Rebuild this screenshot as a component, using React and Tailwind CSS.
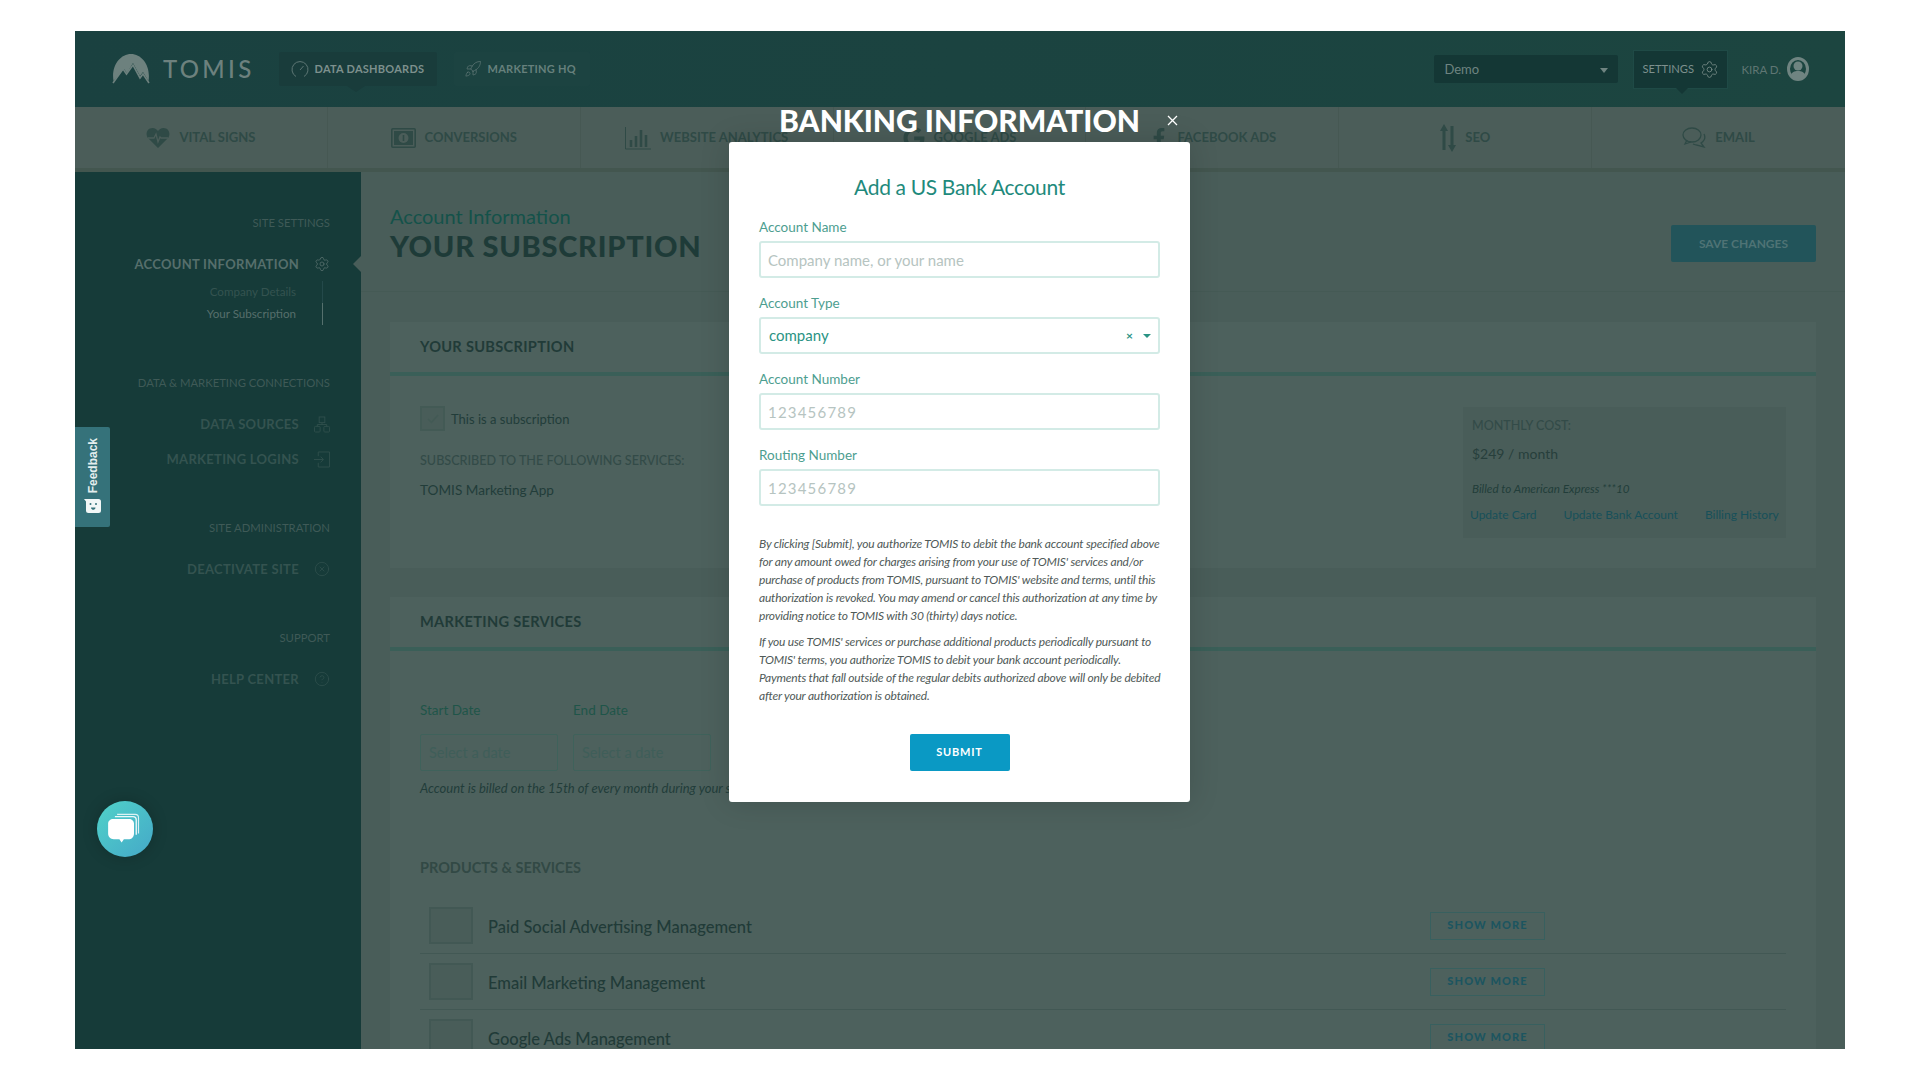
import React from 'react';
import { Rocket, Settings, CircleX, CircleHelp } from 'lucide-react';
import { FaGoogle, FaFacebookF } from 'react-icons/fa';

const Logo = () => (
  <svg width="38" height="31" viewBox="0 0 38 31" fill="none">
    <path d="M1.500 27C-1 12 8 0 19 0s20 12 17.500 27L31 18l-3 4-7-13-6 10-3-4z" fill="#6d817e" />
    <path d="M1 29l10-14 3.500 5L21 11l7 13 3-4 6 9" stroke="#6d817e" strokeWidth="1.600" />
  </svg>
);

const Gauge = () => (
  <svg width="18" height="18" viewBox="0 0 18 18" fill="none" stroke="#5d7674" strokeWidth="1">
    <path d="M5 16.500A8 8 0 1 1 13 16.500" />
    <path d="M9 10l3.500-4" />
  </svg>
);

const HeartIcon = () => (
  <svg width="24" height="22" viewBox="0 0 24 22">
    <path d="M12 21L2 11C-1 7 1 1 6.500 1 9 1 11 2.500 12 4c1-1.500 3-3 5.500-3C23 1 25 7 22 11z" fill="#2f4a46" />
    <path d="M2 11h6l2-4 2 8 2-5 1 1h7" fill="none" stroke="#4b5d59" strokeWidth="1.300" />
  </svg>
);

const MoneyIcon = () => (
  <svg width="25" height="20" viewBox="0 0 25 20" fill="none">
    <rect x="0.800" y="0.800" width="23.400" height="18.400" rx="1" stroke="#2f4a46" strokeWidth="1.600" />
    <path d="M3 3h19v14H3z" fill="#2f4a46" />
    <circle cx="12.500" cy="10" r="5" fill="#4b5d59" />
    <path d="M12.500 7v6" stroke="#2f4a46" strokeWidth="1.600" />
  </svg>
);

const BarsIcon = () => (
  <svg width="26" height="24" viewBox="0 0 26 24" fill="none">
    <path d="M0.500 1v22H26" stroke="#2f4a46" />
    <path d="M6 14v7M11 10v11M16 4v17M21 9v12" stroke="#2f4a46" strokeWidth="2.500" />
  </svg>
);

const ArrowsIcon = () => (
  <svg width="16" height="28" viewBox="0 0 16 28" fill="#2f4a46">
    <path d="M4 0l4 7H5.500v19h-3V7H0zM12 28l-4-7h2.500V2h3v19H16z" />
  </svg>
);

const ChatsIcon = () => (
  <svg width="24" height="21" viewBox="0 0 24 21" fill="none" stroke="#2f4a46" strokeWidth="1.300">
    <ellipse cx="10" cy="8" rx="9" ry="7" />
    <path d="M5 13l-2 4 6-2" />
    <path d="M22 7c2 4 0 7-3 9l3 4-8-2-3-1" />
  </svg>
);

const BoxesIcon = () => (
  <svg width="17" height="17" viewBox="0 0 17 17" fill="none" stroke="#2f4f4c">
    <rect x="5.500" y="0.500" width="6" height="6" />
    <rect x="0.500" y="10.500" width="6" height="6" rx="1" />
    <rect x="10.500" y="10.500" width="6" height="6" rx="1" />
    <path d="M8.500 6.500v2M3.500 10.500v-2h10v2" />
  </svg>
);

const LoginIcon = () => (
  <svg width="17" height="17" viewBox="0 0 17 17" fill="none" stroke="#2f4f4c">
    <path d="M4.500 5V0.500h12v16h-12V12" />
    <path d="M0 8.500h10M7 5.500l3 3-3 3" />
  </svg>
);

const UserIcon = () => (
  <svg width="22" height="24" viewBox="0 0 22 24" fill="none">
    <ellipse cx="11" cy="12" rx="9.500" ry="10.500" stroke="#6f8481" strokeWidth="3" />
    <circle cx="11" cy="9" r="4.500" fill="#6f8481" />
    <path d="M3.500 19c1-4 4-5 7.500-5s6.500 1 7.500 5a9 9 0 0 1-15 0z" fill="#6f8481" />
  </svg>
);

const BubbleIcon = () => (
  <svg width="36" height="36" viewBox="0 0 32 32" fill="none">
    <path d="M9 3h16a3 3 0 0 1 3 3v14" stroke="#fff" strokeWidth="1" opacity="0.800" />
    <path d="M7 5h16a3 3 0 0 1 3 3v13" stroke="#fff" strokeWidth="1.200" opacity="0.900" />
    <path d="M5 7h15c2 0 4 2 4 4v9c0 3-2 5-4 5h-5l-2 3-2-3H6c-3 0-5-2-5-5v-9c0-2 2-4 4-4z" fill="#fff" />
  </svg>
);

const BotIcon = () => (
  <svg width="17" height="14" viewBox="0 0 17 14">
    <path d="M0 0h14.500A2.500 2.500 0 0 1 17 2.500v9a2.500 2.500 0 0 1-2.500 2.500h-10A2.500 2.500 0 0 1 2 11.500V2.500z" fill="#f2f7f7" />
    <circle cx="6.500" cy="5" r="1" fill="#35727a" />
    <circle cx="12" cy="5" r="1" fill="#35727a" />
    <path d="M7 8.500h4.500c0 3-4.500 3-4.500 0z" fill="#35727a" />
  </svg>
);

const tabs = [
  { label: 'VITAL SIGNS', icon: <HeartIcon /> },
  { label: 'CONVERSIONS', icon: <MoneyIcon /> },
  { label: 'WEBSITE ANALYTICS', icon: <BarsIcon /> },
  { label: 'GOOGLE ADS', icon: <FaGoogle size={22} color="#2f4a46" /> },
  { label: 'FACEBOOK ADS', icon: <FaFacebookF size={20} color="#2f4a46" /> },
  { label: 'SEO', icon: <ArrowsIcon /> },
  { label: 'EMAIL', icon: <ChatsIcon /> },
];

const SideHeading = ({ children, className = '' }) => (
  <p className={`h-5 text-right text-[11.3px] leading-5 text-[#3f5a57] ${className}`}>{children}</p>
);

const SideLink = ({ label, icon, bright, className = '' }) => (
  <div className={`flex h-6 items-center justify-end gap-[15px] ${className}`}>
    <span className={`pt-px text-[13px] font-bold tracking-[0.3px] ${bright ? 'text-[#566f6c]' : 'text-[#345350]'}`}>{label}</span>
    <span className="flex w-4 justify-center">{icon}</span>
  </div>
);

const Sidebar = () => (
  <aside className="relative w-[286px] shrink-0 bg-[#163b39] pl-4 pr-[31px] pt-[41px]">
    <SideHeading>SITE SETTINGS</SideHeading>
    <SideLink className="mt-[19px]" bright label="ACCOUNT INFORMATION" icon={<Settings size={18} strokeWidth={1.2} color="#566f6c" />} />
    <div className="mt-[5px] text-[11.6px] leading-[22px]">
      <div className="mr-[7px] border-r border-[#24494a] pr-[26px] text-right text-[#345350]">Company Details</div>
      <div className="mr-[7px] border-r border-[#55706d] pr-[26px] text-right text-[#566f6c]">Your Subscription</div>
    </div>
    <SideHeading className="mt-[48px]">DATA &amp; MARKETING CONNECTIONS</SideHeading>
    <SideLink className="mt-[19px]" label="DATA SOURCES" icon={<BoxesIcon />} />
    <SideLink className="mt-[11px]" label="MARKETING LOGINS" icon={<LoginIcon />} />
    <SideHeading className="mt-[47px]">SITE ADMINISTRATION</SideHeading>
    <SideLink className="mt-[19px]" label="DEACTIVATE SITE" icon={<CircleX size={18} strokeWidth={1} color="#345350" />} />
    <SideHeading className="mt-[47px]">SUPPORT</SideHeading>
    <SideLink className="mt-[19px]" label="HELP CENTER" icon={<CircleHelp size={18} strokeWidth={1} color="#345350" />} />
    <span className="absolute right-0 top-[84px] h-0 w-0 border-y-[8px] border-r-[8px] border-y-transparent border-r-[#495d59]" />
  </aside>
);

const Card = ({ title, children, className = '' }) => (
  <section className={`bg-[#4d615d] ${className}`}>
    <div className="flex h-[54px] items-center border-b-4 border-[#3a5f58] px-[30px]">
      <h3 className="text-[14.6px] font-bold tracking-[0.3px] text-[#213b38]">{title}</h3>
    </div>
    {children}
  </section>
);

const products = ['Paid Social Advertising Management', 'Email Marketing Management', 'Google Ads Management'];

const MainPanel = () => (
  <main className="flex-1 bg-[#495d59]">
    <div className="flex h-[120px] justify-between border-b border-[#455a55] px-[29px] pt-[31px]">
      <div>
        <p className="text-[20px] leading-[26px] text-[#14524a]">Account Information</p>
        <h1 className="mt-px text-[29px] font-black leading-[32px] tracking-[0.75px] text-[#1e3b38]">YOUR SUBSCRIPTION</h1>
      </div>
      <button className="mt-[22px] h-[37px] w-[145px] rounded-[2px] bg-[#22545a] text-[12px] font-bold text-[#4f7375]">SAVE CHANGES</button>
    </div>
    <div className="px-[29px] pt-[30px]">
      <Card title="YOUR SUBSCRIPTION" className="h-[246px]">
        <div className="flex justify-between px-[30px] pt-[30px]">
          <div>
            <div className="flex h-[25px] items-center gap-[6px]">
              <span className="flex h-[25px] w-[25px] items-center justify-center border-2 border-[#435a55] bg-[#495d59]">
                <svg width="12" height="10" viewBox="0 0 12 10" fill="none" stroke="#435a55" strokeWidth="1.500"><path d="M1 5l3.500 3.500L11 1" /></svg>
              </span>
              <span className="pt-[2px] text-[13px] text-[#223d3a]">This is a subscription</span>
            </div>
            <p className="mt-[20px] text-[12.6px] font-medium leading-5 text-[#334b48]">SUBSCRIBED TO THE FOLLOWING SERVICES:</p>
            <p className="mt-[8px] text-[13.600px] leading-[22px] text-[#223d3a]">TOMIS Marketing App</p>
          </div>
          <div className="mt-px h-[131px] w-[323px] bg-[#495d59] pl-[9px] pt-[10px]">
            <p className="text-[12.5px] font-medium leading-[18px] text-[#334b48]">MONTHLY COST:</p>
            <p className="mt-[8px] text-[14px] leading-[22px] text-[#273f3c]">$249 / month</p>
            <p className="mt-[14px] text-[11.7px] italic leading-[18px] text-[#223d3a]">Billed to American Express ***10</p>
            <div className="-ml-[2px] mt-[9px] flex gap-[27px] whitespace-nowrap text-[12px] leading-[18px] text-[#17505a]">
              <span>Update Card</span>
              <span>Update Bank Account</span>
              <span>Billing History</span>
            </div>
          </div>
        </div>
      </Card>
      <Card title="MARKETING SERVICES" className="mt-[29px] h-[460px]">
        <div className="px-[30px] pt-[49px]">
          <div className="flex gap-[15px]">
            {['Start Date', 'End Date'].map((label) => (
              <div key={label} className="w-[138px]">
                <p className="text-[13.500px] leading-5 text-[#1f5549]">{label}</p>
                <div className="mt-[14px] flex h-[37px] items-center rounded-[2px] border border-[#3f625b] px-2 text-[14.500px] text-[#3f5e59]">Select a date</div>
              </div>
            ))}
          </div>
          <p className="mt-[7px] text-[13px] italic leading-5 text-[#223d3a]">Account is billed on the 15th of every month during your subscription.</p>
          <p className="mt-[60px] text-[14.500px] font-bold leading-5 text-[#324945]">PRODUCTS &amp; SERVICES</p>
          <div className="mt-[20px]">
            {products.map((name) => (
              <div key={name} className="h-[56px] border-b border-[#425854] pl-[9px] pt-[9px]">
                <div className="flex h-[37px] items-center">
                  <span className="h-[37px] w-[44px] border-2 border-[#425854] bg-[#495d59]" />
                  <span className="ml-[15px] translate-y-[2px] text-[16.500px] font-medium text-[#213b38]">{name}</span>
                  <button className="ml-auto mr-[241px] h-[28px] w-[115px] border border-[#38605f] text-[11px] font-black tracking-[1.1px] text-[#1c5560]">SHOW MORE</button>
                </div>
              </div>
            ))}
          </div>
        </div>
      </Card>
    </div>
  </main>
);

const Field = ({ label, children }) => (
  <div className="mb-[15px]">
    <label className="block h-5 text-[13.500px] leading-5 text-[#4d9e90]">{label}</label>
    <div className="mt-[4px]">{children}</div>
  </div>
);

const TextInput = ({ placeholder, digits }) => (
  <input
    placeholder={placeholder}
    className={`h-[37px] w-full rounded-[3px] border-2 border-[#d3ebe6] bg-white px-[7px] text-[15px] outline-none placeholder:text-[#b6c4c1] ${digits ? 'tracking-[1.2px]' : ''}`}
  />
);

const BankModal = () => (
  <div className="absolute inset-0 flex flex-col items-center pr-px pt-[71px]">
    <div className="relative w-[461px]">
      <h2 className="h-9 text-center text-[30px] font-black leading-9 text-white">BANKING INFORMATION</h2>
      <svg className="absolute right-[12px] top-[13px]" width="11" height="11" viewBox="0 0 11 11" stroke="#fff" strokeWidth="1.300">
        <path d="M1 1l9 9M10 1l-9 9" />
      </svg>
      <div className="mt-[4px] h-[660px] rounded-[3px] bg-white px-[30px] pt-[30px] shadow-[0_0_30px_rgba(0,0,0,0.15)]">
        <h3 className="h-[30px] text-center text-[21px] leading-[30px] tracking-[-0.35px] text-[#1f8a7c]">Add a US Bank Account</h3>
        <div className="mt-[15px]">
          <Field label="Account Name"><TextInput placeholder="Company name, or your name" /></Field>
          <Field label="Account Type">
            <div className="flex h-[37px] items-center rounded-[3px] border-2 border-[#d3ebe6] pl-[8px] pr-[7px] text-[15px] text-[#2a9384]">
              <span>company</span>
              <span className="ml-auto text-[12px] font-bold leading-none">×</span>
              <span className="ml-[10px] h-0 w-0 border-x-[4px] border-t-[4px] border-x-transparent border-t-[#2a9384]" />
            </div>
          </Field>
          <Field label="Account Number"><TextInput placeholder="123456789" digits /></Field>
          <Field label="Routing Number"><TextInput placeholder="123456789" digits /></Field>
        </div>
        <div className="mt-[29px] whitespace-nowrap text-[12px] italic leading-[18px] tracking-[-0.2px] text-[#505a58]">
          <p>
            By clicking [Submit], you authorize TOMIS to debit the bank account specified above<br />
            for any amount owed for charges arising from your use of TOMIS' services and/or<br />
            purchase of products from TOMIS, pursuant to TOMIS' website and terms, until this<br />
            authorization is revoked. You may amend or cancel this authorization at any time by<br />
            providing notice to TOMIS with 30 (thirty) days notice.
          </p>
          <p className="mt-[8px]">
            If you use TOMIS' services or purchase additional products periodically pursuant to<br />
            TOMIS' terms, you authorize TOMIS to debit your bank account periodically.<br />
            Payments that fall outside of the regular debits authorized above will only be debited<br />
            after your authorization is obtained.
          </p>
        </div>
        <div className="mt-[29px] flex justify-center">
          <button className="h-[37px] w-[100px] rounded-[2px] bg-[#0a99c4] text-[11px] font-bold tracking-[0.8px] text-white">SUBMIT</button>
        </div>
      </div>
    </div>
  </div>
);

export default function App() {
  return (
    <div className="min-h-screen bg-white px-[75px] py-[31px] font-['Lato',sans-serif]">
      <div className="relative flex h-[1018px] flex-col overflow-hidden">
        <header className="flex h-[76px] shrink-0 items-center bg-gradient-to-r from-[#1a4140] to-[#1c4540] pl-[37px] pr-[36px]">
          <Logo />
          <span className="ml-[13px] text-[24px] font-medium tracking-[3.3px] text-[#6d817e]">TOMIS</span>
          <div className="relative ml-[24px] flex h-[34px] w-[158px] items-center gap-[6px] rounded-[2px] bg-[#193c3b] pl-[12px]">
            <Gauge />
            <span className="text-[11px] font-bold tracking-[0.25px] text-[#7d908d]">DATA DASHBOARDS</span>
            <span className="absolute -bottom-[6px] left-[68px] h-0 w-0 border-x-[9px] border-t-[6px] border-x-transparent border-t-[#193c3b]" />
          </div>
          <div className="ml-[17px] flex h-[34px] w-[136px] items-center gap-[6px] rounded-[2px] bg-[#1c4341] pl-[10px]">
            <Rocket size={18} strokeWidth={1} color="#5d7674" />
            <span className="text-[11px] font-bold tracking-[0.25px] text-[#66807c]">MARKETING HQ</span>
          </div>
          <div className="ml-auto flex h-[28px] w-[184px] items-center justify-between rounded-[2px] bg-[#143735] px-[10px] pt-[2px] text-[13px] text-[#6f8481]">
            <span>Demo</span>
            <span className="h-0 w-0 border-x-[4px] border-t-[5px] border-x-transparent border-t-[#6f8481]" />
          </div>
          <div className="relative ml-[15px] flex h-[39px] w-[95px] items-center justify-between border border-[#1f4a46] bg-[#143735] px-[8px]">
            <span className="text-[11.200px] text-[#7d908d]">SETTINGS</span>
            <Settings size={19} strokeWidth={1} color="#7d908d" />
            <span className="absolute -bottom-[6px] left-[42px] h-0 w-0 border-x-[6px] border-t-[6px] border-x-transparent border-t-[#143735]" />
          </div>
          <span className="ml-[13px] pt-[2px] text-[11.500px] text-[#5f7673]">KIRA D.</span>
          <span className="ml-[6px]"><UserIcon /></span>
        </header>
        <nav className="grid h-[65px] shrink-0 grid-cols-7 border-b-4 border-[#43564f] bg-[#4b5d59]">
          {tabs.map((tab) => (
            <div key={tab.label} className="flex items-center justify-center gap-[9px] border-r border-[#465853] last:border-r-0">
              {tab.icon}
              <span className="text-[13px] font-bold text-[#2f4a46]">{tab.label}</span>
            </div>
          ))}
        </nav>
        <div className="flex min-h-0 flex-1">
          <Sidebar />
          <MainPanel />
        </div>
        <div className="absolute left-0 top-[396px] flex h-[100px] w-[35px] flex-col items-center rounded-r-[2px] bg-[#35727a] pt-[11px]">
          <span className="rotate-180 font-['Liberation_Sans',sans-serif] text-[12px] font-bold leading-[16px] text-[#e4eeee] [writing-mode:vertical-rl]">Feedback</span>
          <span className="mt-[6px] flex"><BotIcon /></span>
        </div>
        <div className="absolute left-[22px] top-[770px] flex h-[56px] w-[56px] items-center justify-center rounded-full bg-gradient-to-br from-[#50d2c8] to-[#45a8c8] shadow-[0_0_16px_rgba(0,0,0,0.2)]">
          <BubbleIcon />
        </div>
        <BankModal />
      </div>
    </div>
  );
}
